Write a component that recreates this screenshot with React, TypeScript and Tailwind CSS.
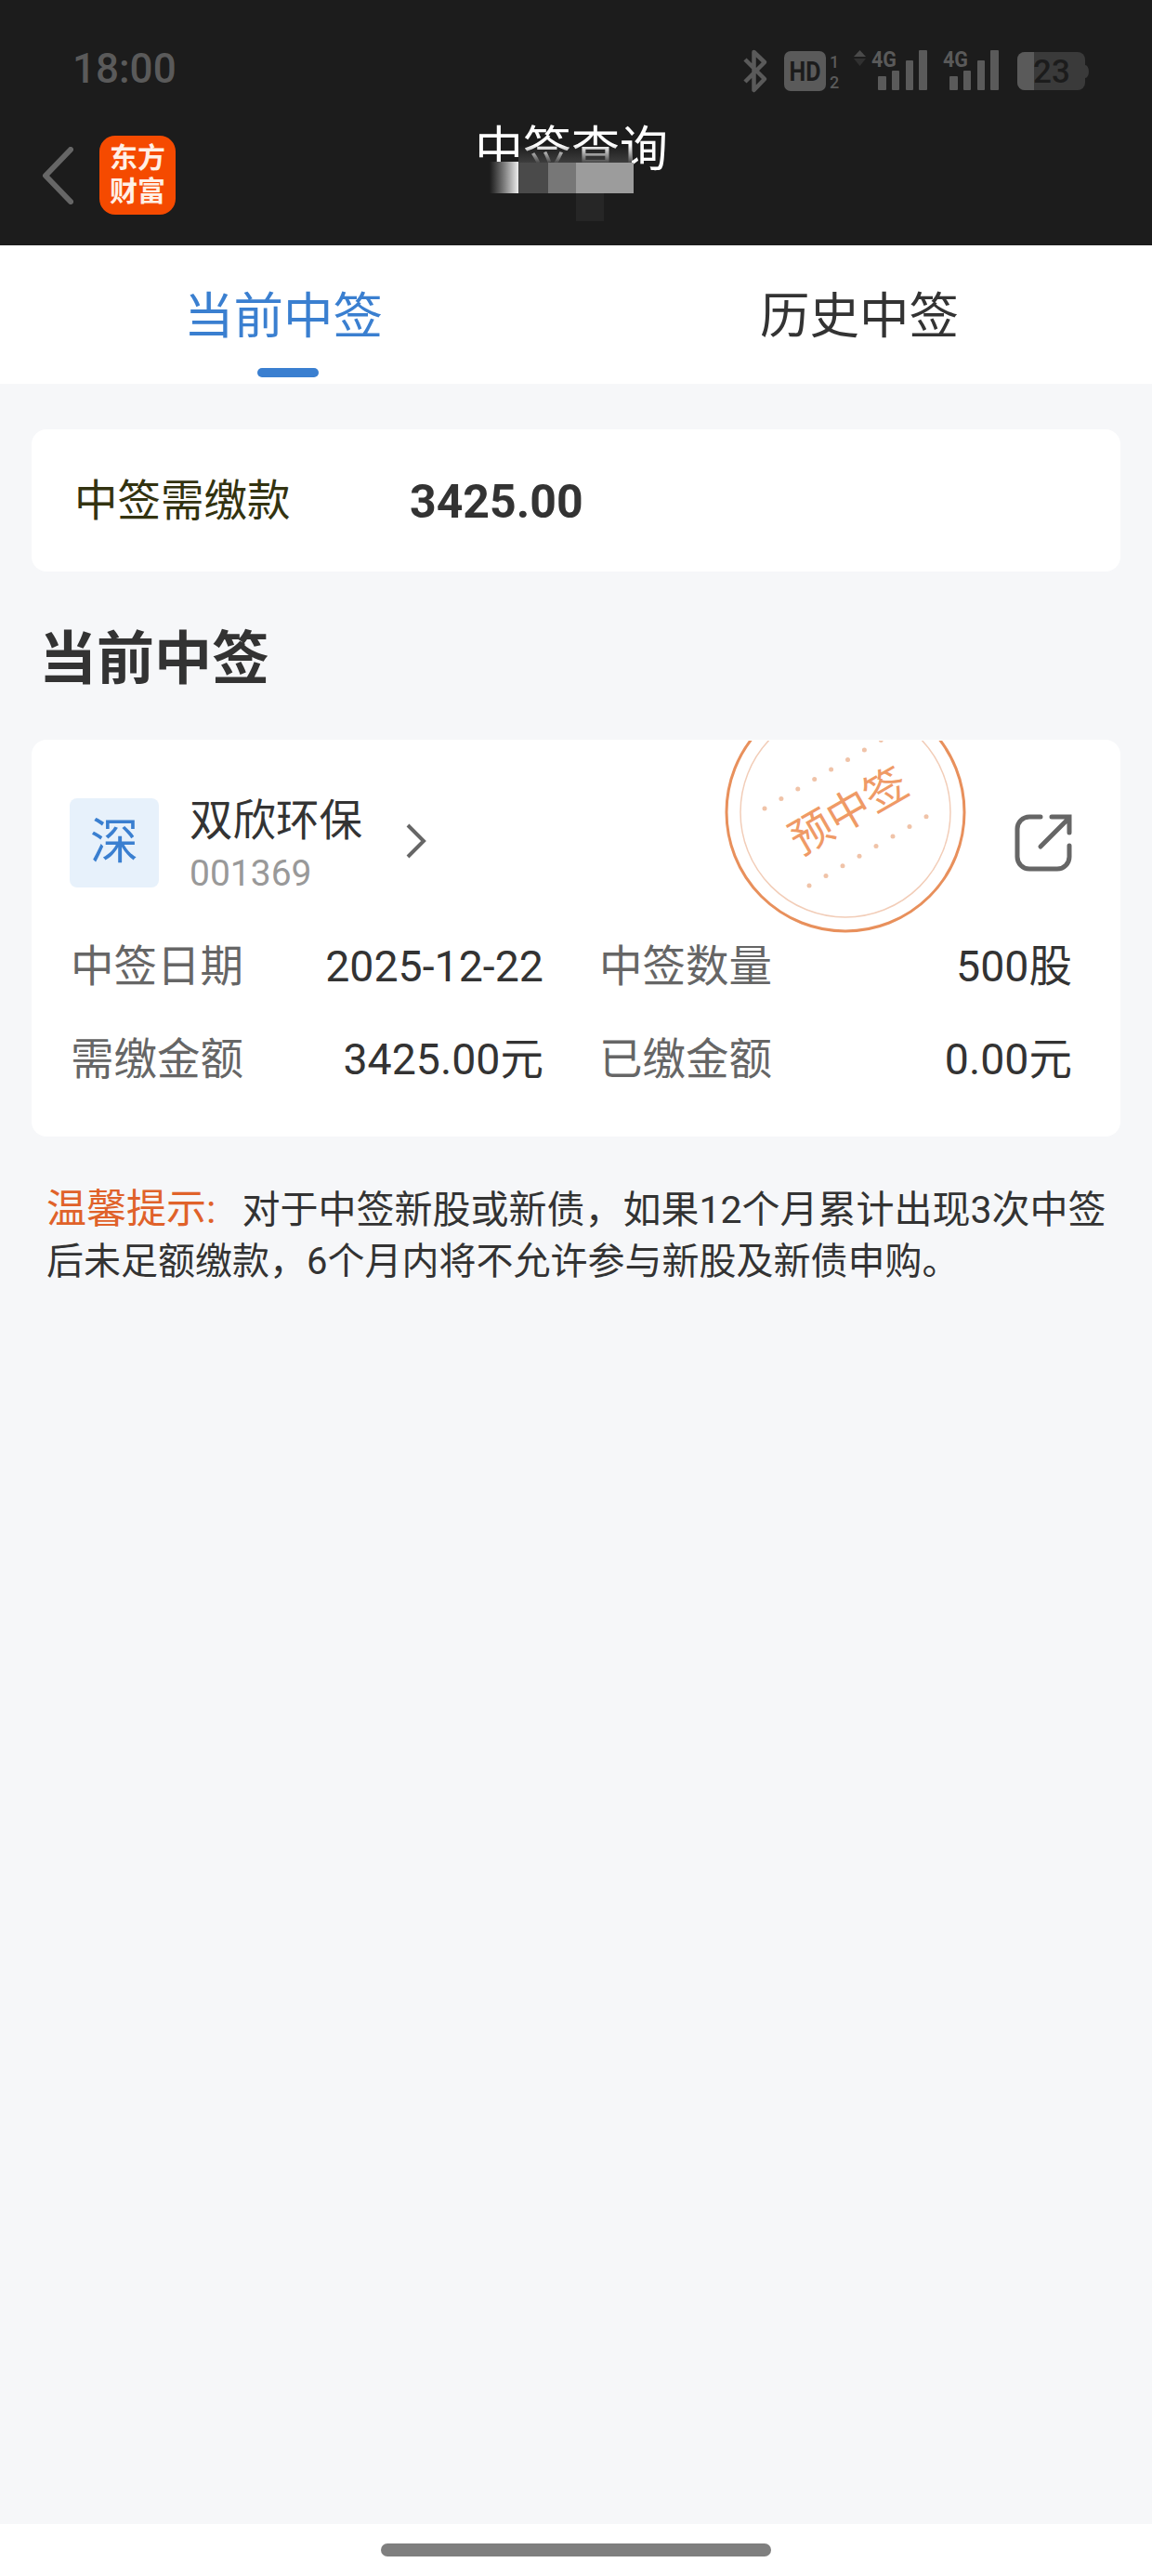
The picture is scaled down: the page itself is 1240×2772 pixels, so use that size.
const sans = "font-['Roboto','Noto_Sans_CJK_SC',sans-serif]";

function StatusIcons() {
  return (
    <svg width="375" height="52" viewBox="0 0 375 52">
      {/* bluetooth */}
      <path d="M3 14 L24 35 L12.5 47 V6 L24 17 L3 38" fill="none" stroke="#5a5a5a" strokeWidth="4.5" strokeLinejoin="round" />
      {/* HD */}
      <rect x="45" y="5" width="45" height="43" rx="7" fill="#5a5a5a" />
      <text x="67.5" y="37" textAnchor="middle" fontSize="30" fontWeight="700" fill="#1c1c1c" fontFamily="Roboto" textLength="34" lengthAdjust="spacingAndGlyphs">HD</text>
      <text x="99" y="23" textAnchor="middle" fontSize="18" fontWeight="500" fill="#5a5a5a" fontFamily="Roboto">1</text>
      <text x="99" y="45" textAnchor="middle" fontSize="18" fontWeight="500" fill="#5a5a5a" fontFamily="Roboto">2</text>
      {/* activity arrows */}
      <path d="M120 11 L126.5 4 L133 11 Z" fill="#4a4a4a" />
      <path d="M120 13 L126.5 21 L133 13 Z" fill="#303030" />
      {/* signal 1 */}
      <text x="139" y="22" fontSize="24" fontWeight="700" fill="#5a5a5a" fontFamily="Roboto" textLength="27" lengthAdjust="spacingAndGlyphs">4G</text>
      <rect x="146" y="32" width="9" height="15" rx="1" fill="#5a5a5a" />
      <rect x="161" y="26" width="8" height="21" rx="1" fill="#5a5a5a" />
      <rect x="176" y="15" width="8" height="32" rx="1" fill="#5a5a5a" />
      <rect x="190" y="4" width="9" height="43" rx="1" fill="#5a5a5a" />
      {/* signal 2 */}
      <text x="216" y="22" fontSize="24" fontWeight="700" fill="#5a5a5a" fontFamily="Roboto" textLength="27" lengthAdjust="spacingAndGlyphs">4G</text>
      <rect x="223" y="32" width="9" height="15" rx="1" fill="#5a5a5a" />
      <rect x="238" y="26" width="8" height="21" rx="1" fill="#5a5a5a" />
      <rect x="253" y="15" width="8" height="32" rx="1" fill="#5a5a5a" />
      <rect x="267" y="4" width="9" height="43" rx="1" fill="#5a5a5a" />
      {/* battery */}
      <rect x="296" y="6" width="73" height="41" rx="8" fill="#3a3a3a" />
      <path d="M304 6 H314 V47 H304 A8 8 0 0 1 296 39 V14 A8 8 0 0 1 304 6 Z" fill="#5a5a5a" />
      <path d="M369 20 A4 7 0 0 1 369 34 Z" fill="#3a3a3a" />
      <text x="333" y="39" textAnchor="middle" fontSize="35" fontWeight="500" fill="#1c1c1c" fontFamily="Roboto">23</text>
    </svg>
  );
}

function Stamp() {
  return (
    <svg width="264" height="214" viewBox="0 0 264 214" className="absolute left-[778px] top-[797px]">
      <circle cx="132" cy="77" r="128" fill="none" stroke="#e8905c" strokeWidth="3" />
      <circle cx="132" cy="77" r="113" fill="none" stroke="#f2cdb8" strokeWidth="1.5" />
      <g fill="#f0c3a8">
        {[0, 1, 2, 3, 4, 5, 6, 7].map((i) => (
          <circle key={i} cx={45 + i * 17.9} cy={73 - i * 10.5} r="2.5" />
        ))}
        {[0, 1, 2, 3, 4, 5, 6, 7].map((i) => (
          <circle key={`b${i}`} cx={93 + i * 18} cy={156 - i * 10.6} r="2.5" />
        ))}
      </g>
      <text
        x="135"
        y="92"
        textAnchor="middle"
        fontSize="46"
        fill="#ef9a66"
        fontFamily="'Noto Sans CJK SC'"
        transform="rotate(-30 135 75)"
      >
        预中签
      </text>
    </svg>
  );
}

function Row({ label, value }: { label: string; value: string }) {
  return (
    <div className="flex items-center justify-between">
      <span className="text-[#666666]">{label}</span>
      <span className="text-[#333333]">{value}</span>
    </div>
  );
}

export default function App() {
  return (
    <div className={`relative flex h-[2772px] w-[1240px] flex-col overflow-hidden bg-[#f6f7f9] ${sans}`}>
      {/* 顶部状态栏 + 标题 */}
      <div className="h-[264px] bg-[#1c1c1c]">
        <div className="flex h-[144px] items-start justify-between pl-[78px] pr-[66px] pt-[50px]">
          <span className="mt-[1px] text-[44px] font-medium leading-[46px] text-[#5a5a5a]">18:00</span>
          <StatusIcons />
        </div>
        <div className="relative flex h-[84px] items-center pl-[45px]">
          <svg width="34" height="62" viewBox="0 0 34 62" fill="none" stroke="#666666" strokeWidth="6" strokeLinecap="round" strokeLinejoin="round" className="mt-[6px]">
            <path d="M31 3 L4 31 L31 59" />
          </svg>
          <div className="ml-[28px] mt-[4px] flex h-[85px] w-[82px] flex-col items-center justify-center rounded-[17px] bg-[#f54a00] text-[30px] font-bold leading-[36px] text-[#fff0e6]">
            <span>东方</span>
            <span>财富</span>
          </div>
          <div className="absolute left-0 right-[10px] top-[-12px] text-center text-[52px] leading-[60px] text-white">中签查询</div>
          {/* 打码区域 */}
          <div className="absolute left-[558px] top-[12px] h-[20px] w-[122px] bg-gradient-to-b from-transparent to-[#3f3f3f]" />
          <div className="absolute left-[527px] top-[30px] h-[34px] w-[31px] bg-gradient-to-r from-[#1c1c1c] to-[#eeeeee]" />
          <div className="absolute left-[558px] top-[31px] h-[33px] w-[32px] bg-[#4a4a4a]" />
          <div className="absolute left-[590px] top-[31px] h-[33px] w-[30px] bg-[#777777]" />
          <div className="absolute left-[620px] top-[31px] h-[33px] w-[62px] bg-[#9c9c9c]" />
          <div className="absolute left-[620px] top-[64px] h-[30px] w-[30px] bg-[#262626]" />
        </div>
      </div>

      {/* tab */}
      <div className="flex h-[149px] bg-white text-[53.5px]">
        <div className="relative flex w-[610px] items-center justify-center pt-[6px] text-[#3a7fd0]">
          当前中签
          <div className="absolute bottom-[7px] left-[277px] h-[10px] w-[66px] rounded-full bg-[#3a7fd0]" />
        </div>
        <div className="flex w-[630px] items-center justify-center pt-[6px] text-[#333333]">历史中签</div>
      </div>

      <div className="flex flex-1 flex-col px-[34px]">
        <div className="mt-[49px] flex h-[153px] items-center rounded-[16px] bg-white pl-[46px] pt-[3px]">
          <span className="w-[361px] text-[46.5px] text-[#333310]">中签需缴款</span>
          <span className="text-[50px] font-bold text-[#333333]">3425.00</span>
        </div>

        <h2 className="mt-[53px] pl-[8px] text-[62px] font-bold leading-[84px] text-[#333333]">当前中签</h2>

        <div className="mt-[44px] h-[427px] rounded-[16px] bg-white pl-[41px] pr-[52px] pt-[63px]">
          <div className="flex h-[96px] items-center">
            <div className="flex h-[96px] w-[96px] items-center justify-center rounded-[8px] bg-[#e7f1fb] text-[52px] text-[#3a7fd0]">深</div>
            <div className="ml-[33px] flex h-[96px] w-[232px] flex-col">
              <span className="mt-[1px] text-[46.5px] leading-[46px] text-[#333333]">双欣环保</span>
              <span className="mt-[12px] text-[39px] leading-[44px] text-[#999999]">001369</span>
            </div>
            <svg width="24" height="38" viewBox="0 0 24 38" fill="none" stroke="#666666" strokeWidth="4" className="mb-[4px]">
              <path d="M3 2 L20 19 L3 36" />
            </svg>
            <svg width="62" height="62" viewBox="0 0 62 62" fill="none" stroke="#666666" strokeWidth="5" strokeLinecap="round" className="ml-auto">
              <path d="M28 3 H16 A13 13 0 0 0 3 16 V46 A13 13 0 0 0 16 59 H46 A13 13 0 0 0 59 46 V34" />
              <path d="M28 35 L58 5 M40 3 H59 V20" />
            </svg>
          </div>
          <div className="mt-[52px] grid grid-cols-[509px_1fr] gap-x-[60px] gap-y-[34px] pl-[1px] text-[46.5px] leading-[66px]">
            <Row label="中签日期" value="2025-12-22" />
            <Row label="中签数量" value="500股" />
            <Row label="需缴金额" value="3425.00元" />
            <Row label="已缴金额" value="0.00元" />
          </div>
        </div>

        <div className="mt-[50px] pl-[16px] leading-[56px] text-[#333333]">
          <p className="text-[41px]">
            <span className="mr-[28px] text-[43px] text-[#e0622a]">温馨提示:</span>
            <span>对于中签新股或新债，如果12个月累计出现3次中签</span>
          </p>
          <p className="text-[40px]">后未足额缴款，6个月内将不允许参与新股及新债申购。</p>
        </div>
      </div>

      {/* 底部手势条 */}
      <div className="flex h-[56px] items-center justify-center bg-white">
        <div className="h-[14px] w-[420px] rounded-full bg-[#7f7f7f]" />
      </div>

      <Stamp />
    </div>
  );
}
